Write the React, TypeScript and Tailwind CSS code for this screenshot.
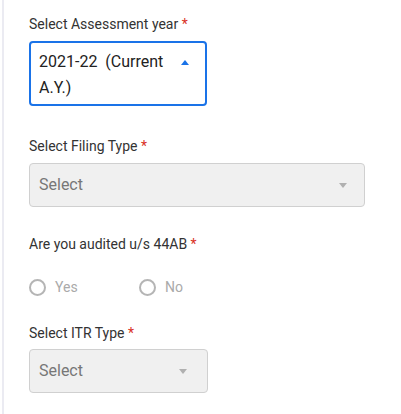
export default function App() {
  const Star = () => <span className="text-[#d93025]">*</span>

  return (
    <div className="h-[414px] w-[401px] bg-white" style={{ fontFamily: 'Roboto, "Liberation Sans", sans-serif' }}>
      <div className="ml-[2px] h-full border-l-2 border-[#ebebf2] pl-[25px] pt-[15px]">
        {/* Assessment year */}
        <label className="block text-[14px] leading-[18px] text-[#333]">
          Select Assessment year <Star />
        </label>
        <div className="mt-[8px] flex h-[65px] w-[178px] items-start rounded-[4px] border-2 border-[#1a73e8] pl-[8px] pr-[16px] pt-[6px]">
          <span className="flex-1 whitespace-pre-wrap text-[16px] leading-[26px] text-[#222]">2021-22  (Current A.Y.)</span>
          <svg className="mt-[10px] h-[6px] w-[8px]" viewBox="0 0 8 6">
            <path d="M0 6 L4 1 L8 6 Z" fill="#1a73e8" />
          </svg>
        </div>

        {/* Filing type */}
        <label className="mt-[31px] block text-[14px] leading-[18px] text-[#333]">
          Select Filing Type <Star />
        </label>
        <div className="mt-[8px] flex h-[44px] w-[336px] items-center rounded-[4px] border border-[#d0d0d0] bg-[#f0f0f0] pl-[9px] pr-[17px]">
          <span className="flex-1 text-[16px] text-[#777]">Select</span>
          <svg className="h-[5px] w-[8px]" viewBox="0 0 8 5">
            <path d="M0 0 L8 0 L4 5 Z" fill="#b0b0b0" />
          </svg>
        </div>

        {/* Audited */}
        <label className="mt-[28px] block text-[14px] leading-[18px] text-[#333]">
          Are you audited u/s 44AB <Star />
        </label>
        <div className="mt-[24px] flex items-center">
          <label className="flex w-[110px] items-center gap-[9px]">
            <span className="h-[17px] w-[17px] rounded-full border-2 border-[#b5b5b5]" />
            <span className="text-[14px] text-[#aaa]">Yes</span>
          </label>
          <label className="flex items-center gap-[9px]">
            <span className="h-[17px] w-[17px] rounded-full border-2 border-[#b5b5b5]" />
            <span className="text-[14px] text-[#aaa]">No</span>
          </label>
        </div>

        {/* ITR type */}
        <label className="mt-[26px] block text-[14px] leading-[18px] text-[#333]">
          Select ITR Type <Star />
        </label>
        <div className="mt-[7px] flex h-[44px] w-[179px] items-center rounded-[4px] border border-[#d0d0d0] bg-[#f0f0f0] pl-[9px] pr-[20px]">
          <span className="flex-1 text-[16px] text-[#777]">Select</span>
          <svg className="h-[5px] w-[8px]" viewBox="0 0 8 5">
            <path d="M0 0 L8 0 L4 5 Z" fill="#b0b0b0" />
          </svg>
        </div>
      </div>
    </div>
  )
}
